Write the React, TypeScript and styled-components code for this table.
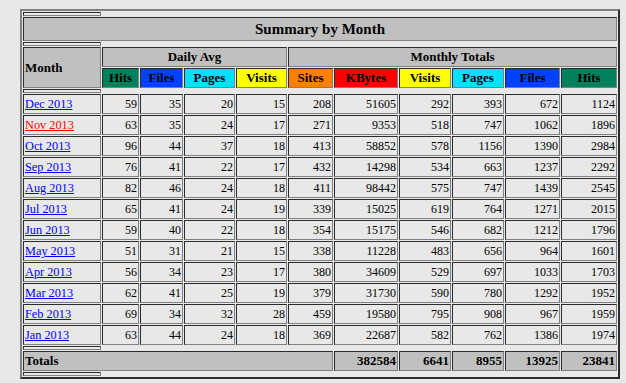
import React from "react";
import styled, { createGlobalStyle } from "styled-components";

const GlobalStyle = createGlobalStyle`
  html, body {
    margin: 0;
    padding: 0;
    background: #e8e8e8;
    font-family: "Liberation Serif", "Times New Roman", serif;
    color: #000000;
  }
`;

const Page = styled.div`
  padding: 9px 0 0 20px;
`;

const Table = styled.table`
  width: 600px;
  table-layout: fixed;
  border-collapse: separate;
  border-spacing: 1px;
  border-width: 2px;
  border-style: solid;
  border-color: #808080 #2c2c2c #2c2c2c #808080;
  box-sizing: border-box;
`;

const Col = styled.col<{ $w: number }>`
  width: ${(p) => p.$w}px;
`;

const cellBorder = `
  border-width: 1px;
  border-style: solid;
  border-color: #2c2c2c #808080 #808080 #2c2c2c;
  box-sizing: border-box;
`;

const SepCell = styled.th`
  ${cellBorder}
  padding: 0;
  font-size: 0;
  line-height: 0;
`;

const Spacer = styled.div`
  height: 2px;
`;

const TitleCell = styled.th`
  ${cellBorder}
  padding: 1px;
  background: #c0c0c0;
  font-size: 15px;
  line-height: 20px;
  font-weight: bold;
  text-align: center;
`;

const HeadCell = styled.th<{ $bg: string; $align?: "left" | "center" | "right" }>`
  ${cellBorder}
  padding: 1px;
  background: ${(p) => p.$bg};
  font-size: 13px;
  line-height: 16px;
  font-weight: bold;
  text-align: ${(p) => p.$align ?? "center"};
  white-space: nowrap;
  overflow: hidden;
`;

const MonthCell = styled.td`
  ${cellBorder}
  padding: 1px;
  font-size: 12.3px;
  line-height: 16px;
  text-align: left;
  white-space: nowrap;
`;

const MonthLink = styled.a<{ $current?: boolean }>`
  color: ${(p) => (p.$current ? "#ff0000" : "#0000ff")};
  text-decoration: underline;
`;

const NumCell = styled.td`
  ${cellBorder}
  padding: 1px;
  font-size: 12px;
  line-height: 16px;
  text-align: right;
  white-space: nowrap;
`;

const TotalCell = styled.th<{ $align?: "left" | "right" }>`
  ${cellBorder}
  padding: 1px;
  background: #c0c0c0;
  font-size: 13px;
  line-height: 16px;
  font-weight: bold;
  text-align: ${(p) => p.$align ?? "right"};
  white-space: nowrap;
`;

const colWidths = [78, 37, 43, 51, 51, 45, 64, 52, 52, 55, 56];

const dailyHeads = [
  { label: "Hits", bg: "#00805c" },
  { label: "Files", bg: "#0040ff" },
  { label: "Pages", bg: "#00e0ff" },
  { label: "Visits", bg: "#ffff00" },
];

const monthlyHeads = [
  { label: "Sites", bg: "#ff8000" },
  { label: "KBytes", bg: "#ff0000" },
  { label: "Visits", bg: "#ffff00" },
  { label: "Pages", bg: "#00e0ff" },
  { label: "Files", bg: "#0040ff" },
  { label: "Hits", bg: "#00805c" },
];

type Row = { month: string; values: number[]; current?: boolean };

const rows: Row[] = [
  { month: "Dec 2013", values: [59, 35, 20, 15, 208, 51605, 292, 393, 672, 1124] },
  { month: "Nov 2013", values: [63, 35, 24, 17, 271, 9353, 518, 747, 1062, 1896], current: true },
  { month: "Oct 2013", values: [96, 44, 37, 18, 413, 58852, 578, 1156, 1390, 2984] },
  { month: "Sep 2013", values: [76, 41, 22, 17, 432, 14298, 534, 663, 1237, 2292] },
  { month: "Aug 2013", values: [82, 46, 24, 18, 411, 98442, 575, 747, 1439, 2545] },
  { month: "Jul 2013", values: [65, 41, 24, 19, 339, 15025, 619, 764, 1271, 2015] },
  { month: "Jun 2013", values: [59, 40, 22, 18, 354, 15175, 546, 682, 1212, 1796] },
  { month: "May 2013", values: [51, 31, 21, 15, 338, 11228, 483, 656, 964, 1601] },
  { month: "Apr 2013", values: [56, 34, 23, 17, 380, 34609, 529, 697, 1033, 1703] },
  { month: "Mar 2013", values: [62, 41, 25, 19, 379, 31730, 590, 780, 1292, 1952] },
  { month: "Feb 2013", values: [69, 34, 32, 28, 459, 19580, 795, 908, 967, 1959] },
  { month: "Jan 2013", values: [63, 44, 24, 18, 369, 22687, 582, 762, 1386, 1974] },
];

const totals = [382584, 6641, 8955, 13925, 23841];

const Separator = () => (
  <tr>
    <SepCell>
      <Spacer />
    </SepCell>
  </tr>
);

export default function App() {
  return (
    <>
      <GlobalStyle />
      <Page>
        <Table>
          <colgroup>
            {colWidths.map((w, i) => (
              <Col key={i} $w={w} />
            ))}
          </colgroup>
          <tbody>
            <Separator />
            <tr>
              <TitleCell colSpan={11}>Summary by Month</TitleCell>
            </tr>
            <Separator />
            <tr>
              <HeadCell rowSpan={2} $bg="#c0c0c0" $align="left">
                Month
              </HeadCell>
              <HeadCell colSpan={4} $bg="#c0c0c0">
                Daily Avg
              </HeadCell>
              <HeadCell colSpan={6} $bg="#c0c0c0">
                Monthly Totals
              </HeadCell>
            </tr>
            <tr>
              {dailyHeads.map((h, i) => (
                <HeadCell key={"d" + i} $bg={h.bg}>
                  {h.label}
                </HeadCell>
              ))}
              {monthlyHeads.map((h, i) => (
                <HeadCell key={"m" + i} $bg={h.bg}>
                  {h.label}
                </HeadCell>
              ))}
            </tr>
            <Separator />
            {rows.map((r) => (
              <tr key={r.month}>
                <MonthCell>
                  <MonthLink href="#" $current={r.current}>
                    {r.month}
                  </MonthLink>
                </MonthCell>
                {r.values.map((v, i) => (
                  <NumCell key={i}>{v}</NumCell>
                ))}
              </tr>
            ))}
            <Separator />
            <tr>
              <TotalCell colSpan={6} $align="left">
                Totals
              </TotalCell>
              {totals.map((t, i) => (
                <TotalCell key={i}>{t}</TotalCell>
              ))}
            </tr>
            <Separator />
          </tbody>
        </Table>
      </Page>
    </>
  );
}
